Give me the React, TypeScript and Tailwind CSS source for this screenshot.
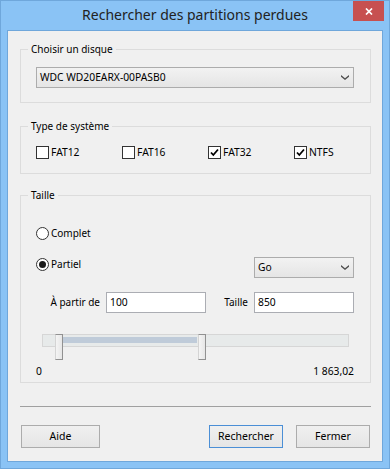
import React from 'react';

const seg = { fontFamily: '"Noto Sans", "Open Sans", sans-serif' };

const Chevron = () => (
  <svg width="8" height="5" viewBox="0 0 8 5" className="shrink-0">
    <path d="M0 0 L4 3.2 L8 0 V1.8 L4 5 L0 1.8 Z" fill="#4d4d4d" />
  </svg>
);

const Select = ({ value, className }: { value: string; className: string }) => (
  <div
    className={`flex h-[21px] items-center justify-between border border-[#acacac] bg-gradient-to-b from-[#f2f2f2] to-[#e5e5e5] pl-[3px] pr-[4px] text-[10.3px] text-black ${className}`}
    style={seg}
  >
    <span>{value}</span>
    <Chevron />
  </div>
);

const Checkbox = ({ label, checked, last }: { label: string; checked?: boolean; last?: boolean }) => (
  <div className={`flex items-center gap-[2px] ${last ? '' : 'w-[86px]'}`}>
    <div className="flex h-[13px] w-[13px] items-center justify-center border border-[#333333] bg-white">
      {checked && (
        <svg width="11" height="11" viewBox="0 0 11 11">
          <path d="M2 5.5 L4.3 8 L9 2.5" stroke="#000" strokeWidth="1.8" fill="none" />
        </svg>
      )}
    </div>
    <span className="text-[10.3px] leading-[13px] text-black" style={seg}>
      {label}
    </span>
  </div>
);

const Radio = ({ label, checked }: { label: string; checked?: boolean }) => (
  <div className="flex items-center gap-[2px]">
    <div className="flex h-[13px] w-[13px] items-center justify-center rounded-full border border-[#333333] bg-white">
      {checked && <div className="h-[7px] w-[7px] rounded-full bg-[#1a1a1a]" />}
    </div>
    <span className="text-[10px] leading-[13px] text-black" style={seg}>
      {label}
    </span>
  </div>
);

const Group = ({
  title,
  height,
  className,
  children,
}: {
  title: string;
  height: string;
  className: string;
  children: React.ReactNode;
}) => (
  <fieldset className={`min-w-0 border border-[#dcdcdc] pl-[15px] pr-[16px] ${height} ${className}`}>
    <legend className="-ml-[8px] px-[3px] text-[10px] leading-[16px] text-black" style={seg}>
      {title}
    </legend>
    {children}
  </fieldset>
);

const Button = ({ label, width, primary }: { label: string; width: string; primary?: boolean }) => (
  <button
    className={`h-[23px] ${width} border ${
      primary ? 'border-[#4b8fd6]' : 'border-[#acacac]'
    } bg-gradient-to-b from-[#f0f0f0] to-[#e5e5e5] text-[10.5px] text-black`}
    style={seg}
  >
    {label}
  </button>
);

export default function App() {
  return (
    <div className="flex h-[469px] w-[390px] flex-col border border-[#6fa7db] bg-[#8ac3f5] px-[6px] pb-[6px]">
      <div className="-mx-[6px] grid h-[29px] grid-cols-[1fr_auto_1fr]">
        <div />
        <div className="pt-[4px] text-[14px] leading-[20px] text-[#222222]" style={seg}>
          Rechercher des partitions perdues
        </div>
        <div className="flex justify-end pr-[5px]">
          <div className="flex h-[20px] w-[31px] items-center justify-center bg-[#c75050]">
            <svg width="8" height="7" viewBox="0 0 8 7">
              <path d="M1 0.5 L7 6.5 M7 0.5 L1 6.5" stroke="#fff" strokeWidth="1.7" />
            </svg>
          </div>
        </div>
      </div>

      <div className="flex flex-1 flex-col border border-[#6fa7db] bg-[#f0f0f0] pl-[12px] pr-[11px]">
        <Group title="Choisir un disque" height="h-[62px]" className="mt-[10px]">
          <Select value="WDC WD20EARX-00PASB0" className="mt-[10px] w-[318px]" />
        </Group>

        <Group title="Type de système" height="h-[56px]" className="mt-[15px]">
          <div className="mt-[12px] flex">
            <Checkbox label="FAT12" />
            <Checkbox label="FAT16" />
            <Checkbox label="FAT32" checked />
            <Checkbox label="NTFS" checked last />
          </div>
        </Group>

        <Group title="Taille" height="h-[196px]" className="mt-[13px]">
          <div className="mt-[24px]">
            <Radio label="Complet" />
          </div>
          <div className="mt-[17px] flex w-[318px] items-start justify-between">
            <div className="mt-[1px]">
              <Radio label="Partiel" checked />
            </div>
            <Select value="Go" className="w-[100px]" />
          </div>
          <div
            className="mt-[14px] grid grid-cols-[70px_100px_48px_100px] items-center text-[10px] text-black"
            style={seg}
          >
            <span className="pr-[6px] text-right">À partir de</span>
            <div className="flex h-[21px] items-center border border-[#abadb3] bg-white pl-[3px] text-[10.3px]">
              100
            </div>
            <span className="pr-[6px] text-right">Taille</span>
            <div className="flex h-[21px] items-center border border-[#abadb3] bg-white pl-[3px] text-[10.3px]">
              850
            </div>
          </div>

          <div className="relative ml-[6px] mt-[21px] h-[26px] w-[307px]">
            <div className="relative mt-[7px] h-[13px] w-[307px] border border-[#d6d6d6] bg-[#e7eaea]">
              <div className="absolute left-[20px] top-[2px] h-[6px] w-[134px] bg-[#bfcbd9]" />
            </div>
            <div className="absolute left-[13px] top-0 h-[26px] w-[8px] border border-l-[#d4d4d4] border-t-[#919191] border-r-[#919191] border-b-[#919191] bg-gradient-to-r from-[#f4f4f4] to-[#e6e6e6]" />
            <div className="absolute left-[156px] top-0 h-[26px] w-[8px] border border-l-[#d4d4d4] border-t-[#919191] border-r-[#919191] border-b-[#919191] bg-gradient-to-r from-[#f4f4f4] to-[#e6e6e6]" />
          </div>
          <div className="mt-[5px] flex w-[318px] justify-between text-[10.3px] leading-[13px] text-black" style={seg}>
            <span>0</span>
            <span>1 863,02</span>
          </div>
        </Group>

        <div className="mt-[23px] h-px w-[351px] bg-[#a0a0a0]" />

        <div className="mt-[18px] flex items-center pl-[1px] pr-[1px]">
          <Button label="Aide" width="w-[79px]" />
          <div className="flex-1" />
          <Button label="Rechercher" width="w-[74px]" primary />
          <div className="w-[13px]" />
          <Button label="Fermer" width="w-[74px]" />
        </div>
      </div>
    </div>
  );
}
